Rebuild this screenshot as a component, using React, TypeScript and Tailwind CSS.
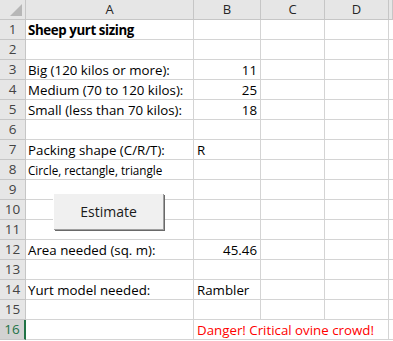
import React from 'react';

const cols = ['A', 'B', 'C', 'D', ''];

type Row = {
  a?: React.ReactNode;
  b?: React.ReactNode;
  bRight?: boolean;
  aClass?: string;
  bSpan?: boolean;
  bClass?: string;
};

const rows: Row[] = [
  { a: 'Sheep yurt sizing', aClass: 'font-bold tracking-[-0.4px]' },
  {},
  { a: 'Big (120 kilos or more):', b: '11', bRight: true },
  { a: 'Medium (70 to 120 kilos):', b: '25', bRight: true },
  { a: 'Small (less than 70 kilos):', b: '18', bRight: true },
  {},
  { a: 'Packing shape (C/R/T):', b: 'R' },
  { a: 'Circle, rectangle, triangle', aClass: 'text-[11.7px]' },
  {},
  {},
  {},
  { a: 'Area needed (sq. m):', b: '45.46', bRight: true },
  {},
  { a: 'Yurt model needed:', b: 'Rambler' },
  {},
  { b: 'Danger! Critical ovine crowd!', bSpan: true, bClass: 'text-[#ff0000]' },
];

export default function App() {
  return (
    <div
      className="relative w-[393px] h-[341px] overflow-hidden bg-white text-black"
      style={{ fontFamily: '"Open Sans", "Noto Sans", sans-serif' }}
    >
      <div className="grid grid-cols-[26px_168px_67px_64px_64px_1fr] auto-rows-[20px] text-[13.3px]">
        {/* header row */}
        <div className="relative bg-[#e6e6e6] border-r border-b border-[#c6c6c6]">
          <div className="absolute right-[3px] bottom-[3px] w-0 h-0 border-l-[12px] border-l-transparent border-b-[12px] border-b-[#b7b7b7]" />
        </div>
        {cols.map((c, i) => (
          <div
            key={i}
            className="bg-[#e6e6e6] border-r border-b border-[#c6c6c6] flex items-center justify-center text-[#262626] text-[13px]"
          >
            {c}
          </div>
        ))}

        {rows.map((r, i) => {
          const n = i + 1;
          const selected = n === 16;
          return (
            <React.Fragment key={n}>
              <div
                className={
                  selected
                    ? 'bg-[#d2d2d2] border-r-2 border-r-[#217346] border-b border-b-[#c6c6c6] flex items-center justify-center text-[#217346] text-[13.5px]'
                    : 'bg-[#e6e6e6] border-r border-b border-[#c6c6c6] flex items-center justify-center text-[#444444] text-[13.5px]'
                }
              >
                {n}
              </div>
              <div
                className={`border-r border-b border-[#d4d4d4] flex items-end leading-[18px] pl-[2px] whitespace-nowrap ${r.aClass ?? ''}`}
              >
                {r.a}
              </div>
              <div
                className={`border-r border-b border-[#d4d4d4] flex items-end leading-[18px] whitespace-nowrap ${
                  r.bRight ? 'justify-end pr-[3px]' : 'pl-[3px]'
                } ${r.bSpan ? 'col-span-3' : ''} ${r.bClass ?? ''}`}
              >
                {r.b}
              </div>
              {!r.bSpan && (
                <>
                  <div className="border-r border-b border-[#d4d4d4]" />
                  <div className="border-r border-b border-[#d4d4d4]" />
                </>
              )}
              <div className="border-b border-[#d4d4d4]" />
            </React.Fragment>
          );
        })}
      </div>

      {/* form button over the sheet */}
      <button
        className="absolute left-[53px] top-[193px] w-[110px] h-[36px] bg-[#f0f0f0] border-t border-l border-t-white border-l-white shadow-[1px_1px_0_#a0a0a0,2px_2px_0_#696969] flex items-center justify-center text-[14px] text-[#1a1a1a]"
      >
        Estimate
      </button>
    </div>
  );
}
